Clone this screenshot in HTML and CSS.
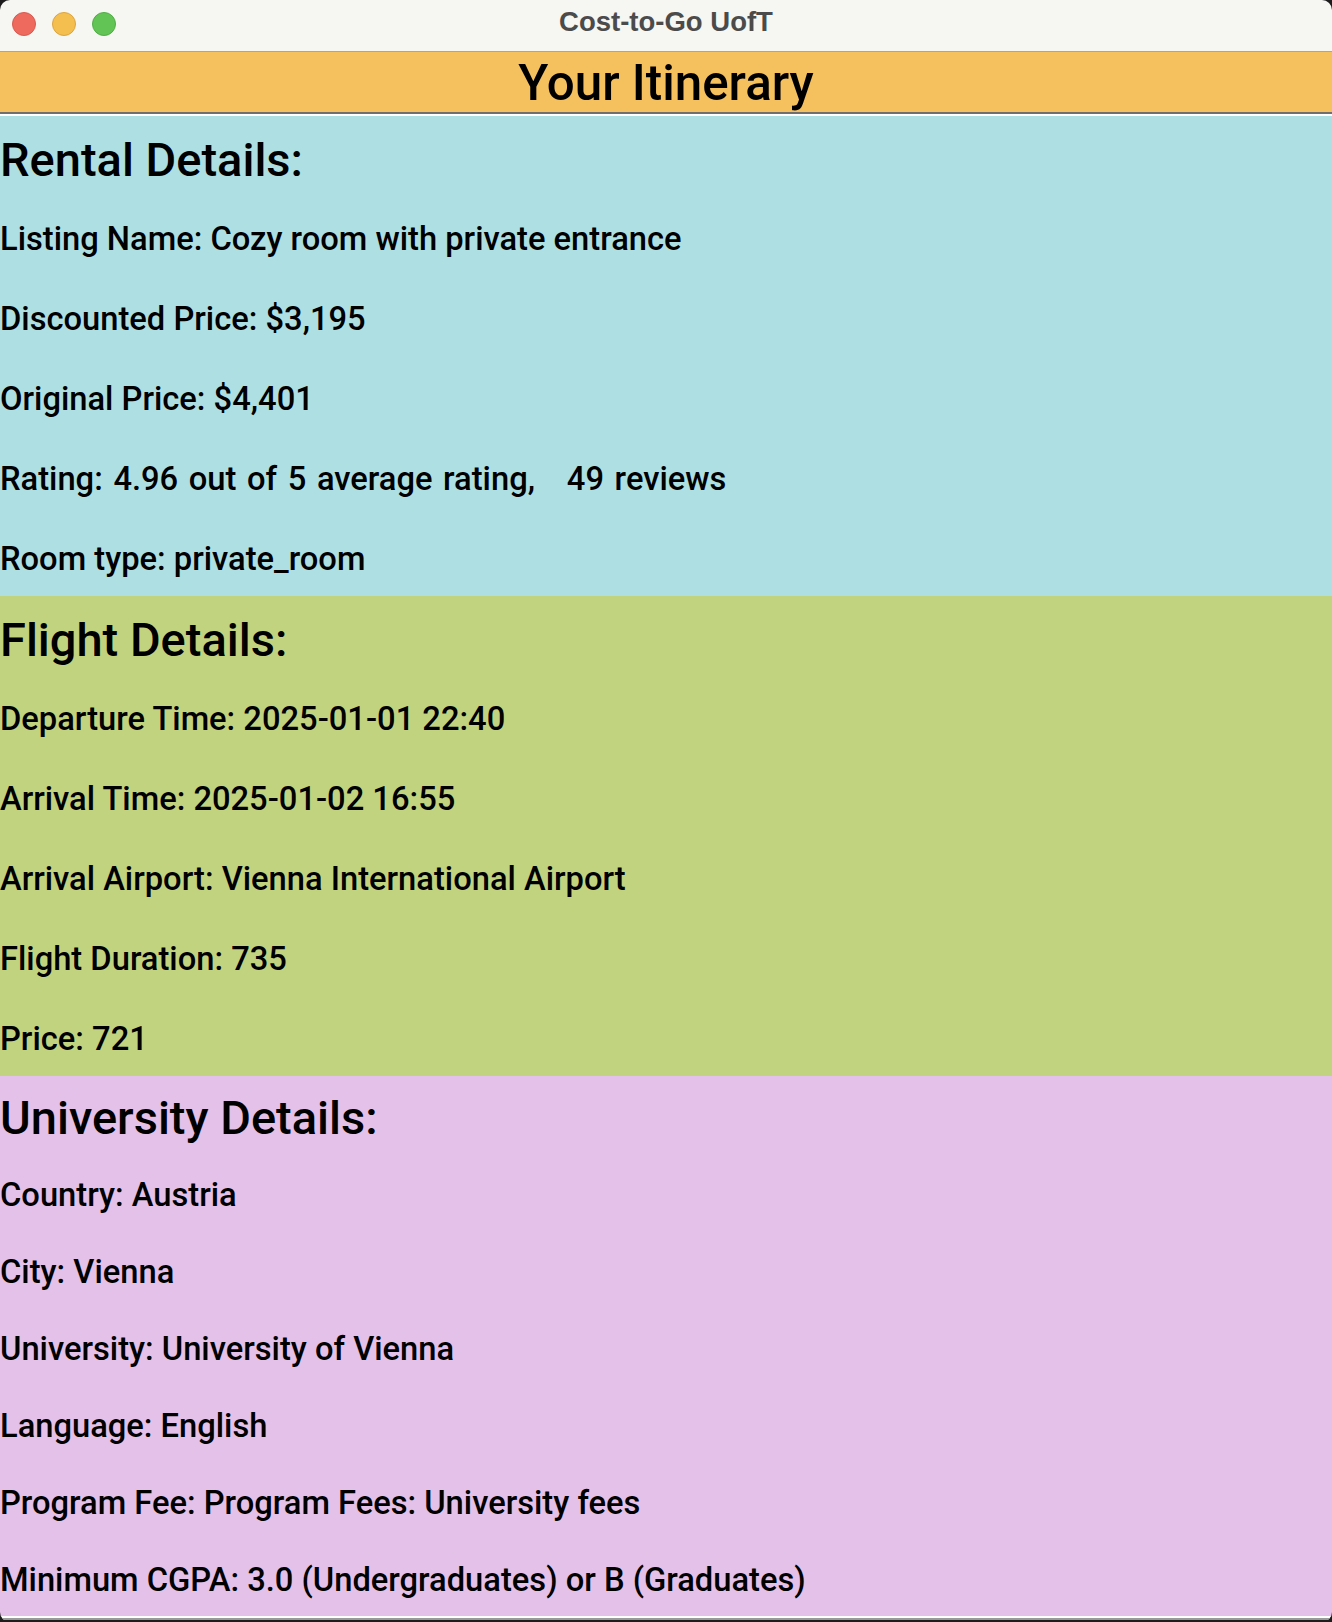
FILE: index.html
```html
<!DOCTYPE html>
<html>
<head>
<meta charset="utf-8">
<title>Cost-to-Go UofT</title>
<link rel="stylesheet" href="styles.css">
</head>
<body>
<div class="window">
  <div class="titlebar">
    <div class="lights">
      <span class="light red"></span>
      <span class="light yellow"></span>
      <span class="light green"></span>
    </div>
    <div class="wtitle">Cost-to-Go UofT</div>
  </div>
  <header class="banner">Your Itinerary</header>
  <div class="sep"></div>
  <section class="panel rental">
    <h2 class="row head">Rental Details:</h2>
    <p class="row">Listing Name: Cozy room with private entrance</p>
    <p class="row">Discounted Price: $3,195</p>
    <p class="row">Original Price: $4,401</p>
    <p class="row wide">Rating: 4.96 out of 5 average rating,   49 reviews</p>
    <p class="row">Room type: private_room</p>
  </section>
  <section class="panel flight">
    <h2 class="row head">Flight Details:</h2>
    <p class="row">Departure Time: 2025-01-01 22:40</p>
    <p class="row">Arrival Time: 2025-01-02 16:55</p>
    <p class="row">Arrival Airport: Vienna International Airport</p>
    <p class="row">Flight Duration: 735</p>
    <p class="row">Price: 721</p>
  </section>
  <section class="panel uni">
    <h2 class="row head">University Details:</h2>
    <p class="row">Country: Austria</p>
    <p class="row">City: Vienna</p>
    <p class="row">University: University of Vienna</p>
    <p class="row">Language: English</p>
    <p class="row">Program Fee: Program Fees: University fees</p>
    <p class="row">Minimum CGPA: 3.0 (Undergraduates) or B (Graduates)</p>
  </section>
  <div class="bottom"></div>
</div>
</body>
</html>
```
FILE: styles.css
```css
html, body {
  margin: 0;
  padding: 0;
  background: #1c1c1c;
}
.window {
  width: 1332px;
  height: 1622px;
  overflow: hidden;
  border-radius: 10px;
  display: flex;
  flex-direction: column;
  font-family: Roboto, "Liberation Sans", Arial, sans-serif;
}
.titlebar {
  height: 52px;
  flex: none;
  box-sizing: border-box;
  padding-bottom: 7px;
  background: #f6f6f2;
  border-bottom: 1px solid #d9a13c;
  position: relative;
  display: flex;
  align-items: center;
  justify-content: center;
}
.lights {
  position: absolute;
  left: 12px;
  top: 12px;
  display: flex;
  gap: 16px;
}
.light {
  width: 24px;
  height: 24px;
  border-radius: 50%;
  box-sizing: border-box;
}
.red { background: #ee6a5f; border: 1px solid #d85a50; }
.yellow { background: #f5bf4f; border: 1px solid #dca540; }
.green { background: #61c454; border: 1px solid #52ad46; }
.wtitle {
  font-family: "Liberation Sans", Arial, sans-serif;
  font-weight: bold;
  font-size: 27.5px;
  color: #4b4b4b;
}
.banner {
  height: 60px;
  flex: none;
  box-sizing: border-box;
  padding-top: 3px;
  background: #f5c05e;
  color: #000;
  font-size: 49.3px;
  font-weight: 500;
  line-height: 57px;
  text-align: center;
}
.sep {
  height: 2px;
  flex: none;
  background: #6f6f6f;
  border-bottom: 2px solid #ffffff;
}
.panel {
  display: flex;
  flex-direction: column;
  flex: none;
}
.rental { height: 480px; background: #aedfe3; }
.flight { height: 480px; background: #c2d380; }
.uni { height: 540px; background: #e4c1e8; }
.row {
  flex: 1;
  margin: 0;
  padding-top: 6px;
  display: flex;
  align-items: center;
  font-size: 32.7px;
  font-weight: 500;
  color: #000;
  white-space: pre;
}
.wide {
  word-spacing: 2.5px;
}
.head {
  font-size: 47px;
}
.bottom {
  height: 2px;
  flex: none;
  background: #fff;
  border-bottom: 2px solid #9a9a9a;
}
```
